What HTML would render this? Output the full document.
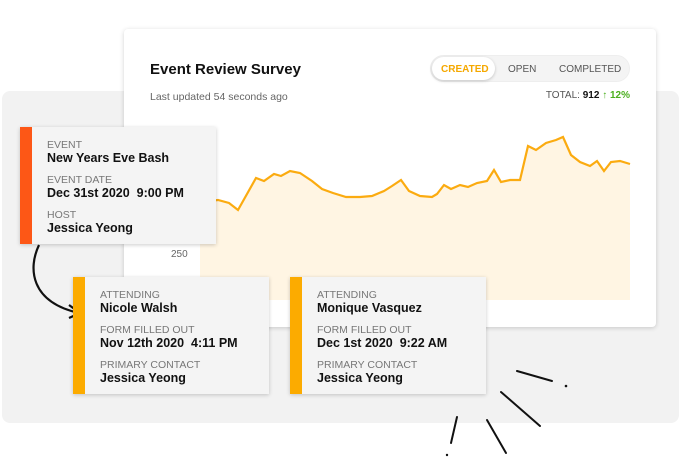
<!DOCTYPE html>
<html><head><style>
*{margin:0;padding:0;box-sizing:border-box}
body{width:679px;height:469px;background:#fff;font-family:"Liberation Sans",sans-serif;position:relative;overflow:hidden}
.bg{position:absolute;left:2px;top:91px;width:677px;height:332px;background:#f2f2f2;border-radius:8px}
.main{position:absolute;left:124px;top:29px;width:532px;height:298px;background:#fff;border-radius:4px;box-shadow:0 1px 5px rgba(0,0,0,.18)}
.card{position:absolute;width:196px;height:117px;background:#f4f4f4;box-shadow:0 1px 4px rgba(0,0,0,.2)}
.card .s{position:absolute;left:0;top:0;bottom:0;width:12px}
.card .t{position:absolute;left:27px;top:12px}
.l{font-size:10.5px;color:#777;line-height:12px}
.v{font-size:12.5px;font-weight:bold;color:#111;line-height:14px;margin-bottom:9px}
</style></head><body>
<div class="bg"></div>
<div class="main">
<div style="position:absolute;left:26px;top:32px;font-size:15px;font-weight:bold;color:#111">Event Review Survey</div>
<div style="position:absolute;left:26px;top:62px;font-size:10.5px;color:#666">Last updated 54 seconds ago</div>
<div style="position:absolute;left:306px;top:26px;width:200px;height:27px;border-radius:14px;background:#f4f4f4;border:1px solid #eee"></div>
<div style="position:absolute;left:308px;top:28px;width:63px;height:23px;border-radius:12px;background:#fff;box-shadow:0 1px 3px rgba(0,0,0,.2)"></div>
<div style="position:absolute;left:317px;top:35px;font-size:10px;color:#f5a800;font-weight:bold">CREATED</div>
<div style="position:absolute;left:384px;top:35px;font-size:10px;color:#555">OPEN</div>
<div style="position:absolute;left:435px;top:35px;font-size:10px;color:#555">COMPLETED</div>
<div style="position:absolute;right:26px;top:61px;font-size:10px;color:#555">TOTAL: <b style="color:#111">912</b> <b style="color:#4caf20">↑ 12%</b></div>
<div style="position:absolute;left:47px;top:220px;font-size:10px;color:#666">250</div>
</div>
<svg style="position:absolute;left:0;top:0" width="679" height="469">
<path d="M200,202 L218,200 229,203 238,210 256,178 264,181 274,174 281,176 290,171 300,173 312,181 322,189 333,193 346,197 360,197 372,196 384,191 392,186 401,180 409,191 420,196 432,197 437,194 444,185 451,189 460,185 468,187 477,183 487,181 494,170 501,182 510,180 520,180 528,146 536,150 546,143 556,140 563,137 571,155 580,162 590,166 597,161 604,171 611,162 620,161 630,164 L630,300 L200,300Z" fill="#fff5e3"/>
<path d="M200,202 L218,200 229,203 238,210 256,178 264,181 274,174 281,176 290,171 300,173 312,181 322,189 333,193 346,197 360,197 372,196 384,191 392,186 401,180 409,191 420,196 432,197 437,194 444,185 451,189 460,185 468,187 477,183 487,181 494,170 501,182 510,180 520,180 528,146 536,150 546,143 556,140 563,137 571,155 580,162 590,166 597,161 604,171 611,162 620,161 630,164" fill="none" stroke="#fbab10" stroke-width="2.2"/>
<path d="M39,245 C28,268 30,302 79,313" fill="none" stroke="#111" stroke-width="2.2"/>
<path d="M69,305 L80,313 L69,318" fill="none" stroke="#111" stroke-width="2.2"/>
<g stroke="#111" stroke-width="2" stroke-linecap="round">
<line x1="517" y1="371" x2="552" y2="381"/>
<line x1="501" y1="392" x2="540" y2="426"/>
<line x1="487" y1="420" x2="506" y2="453"/>
<line x1="457" y1="417" x2="451" y2="443"/>
</g>
<circle cx="566" cy="386" r="1.3" fill="#111"/><circle cx="447" cy="455" r="1.2" fill="#111"/>
</svg>
<div class="card" style="left:20px;top:127px"><div class="s" style="background:#fd5716"></div><div class="t">
<div class="l">EVENT</div><div class="v">New Years Eve Bash</div>
<div class="l">EVENT DATE</div><div class="v">Dec 31st 2020&nbsp; 9:00 PM</div>
<div class="l">HOST</div><div class="v">Jessica Yeong</div></div></div>
<div class="card" style="left:73px;top:277px"><div class="s" style="background:#fcab00"></div><div class="t">
<div class="l">ATTENDING</div><div class="v">Nicole Walsh</div>
<div class="l">FORM FILLED OUT</div><div class="v">Nov 12th 2020&nbsp; 4:11 PM</div>
<div class="l">PRIMARY CONTACT</div><div class="v">Jessica Yeong</div></div></div>
<div class="card" style="left:290px;top:277px"><div class="s" style="background:#fcab00"></div><div class="t">
<div class="l">ATTENDING</div><div class="v">Monique Vasquez</div>
<div class="l">FORM FILLED OUT</div><div class="v">Dec 1st 2020&nbsp; 9:22 AM</div>
<div class="l">PRIMARY CONTACT</div><div class="v">Jessica Yeong</div></div></div>
</body></html>
